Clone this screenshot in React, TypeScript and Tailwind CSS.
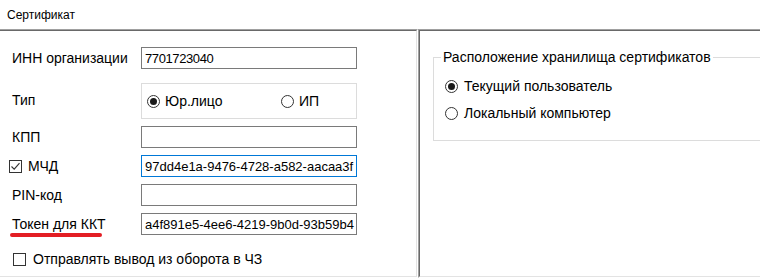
import React from "react";

const Radio = ({ checked }: { checked?: boolean }) => (
  <span className="w-[13px] h-[13px] rounded-full border border-[#333333] bg-white flex items-center justify-center shrink-0">
    {checked && <span className="w-[7px] h-[7px] rounded-full bg-[#1a1a1a]" />}
  </span>
);

const Checkbox = ({ checked }: { checked?: boolean }) => (
  <span className="w-[13px] h-[13px] border border-[#333333] bg-white flex items-center justify-center shrink-0">
    {checked && (
      <svg width="11" height="11" viewBox="0 0 11 11">
        <path d="M1.5 5.5 L4.2 8.2 L9.5 2.2" fill="none" stroke="#333333" strokeWidth="1.1" />
      </svg>
    )}
  </span>
);

const Field = ({
  value,
  focused,
  tight,
}: {
  value?: string;
  focused?: boolean;
  tight?: boolean;
}) => (
  <div
    className={`w-[216px] h-[22px] shrink-0 border bg-white pl-[3px] flex items-center overflow-hidden whitespace-nowrap text-[13px] ${
      focused ? "border-[#0078d7]" : "border-[#7a7a7a]"
    } ${tight ? "tracking-[-0.4px]" : ""}`}
  >
    {value}
  </div>
);

export default function App() {
  return (
    <div
      className="w-[760px] h-[280px] bg-white overflow-hidden text-[14px] text-black leading-none"
      style={{ fontFamily: '"Liberation Sans", Arial, sans-serif' }}
    >
      <div className="h-[29px] pl-[7px] flex items-center text-[12px]">Сертификат</div>
      <div className="flex h-[249px]">
        {/* left panel */}
        <div className="w-[418px] shrink-0 border-t border-r border-b border-t-[#a0a0a0] border-r-white border-b-white">
          <div className="h-full border-t border-r border-b border-t-[#696969] border-r-[#e3e3e3] border-b-[#e3e3e3] pt-[16px]">
            <div className="flex items-center h-[22px]">
              <div className="w-[141px] pl-[12px]">ИНН организации</div>
              <Field value="7701723040" tight />
            </div>
            <div className="flex items-center h-[36px] mt-[14px]">
              <div className="w-[141px] pl-[12px] -mt-[3px]">Тип</div>
              <div className="w-[216px] h-[36px] border border-[#dcdcdc] flex items-center pl-[5px]">
                <div className="flex items-center gap-[5px] w-[134px]">
                  <Radio checked />
                  <span>Юр.лицо</span>
                </div>
                <div className="flex items-center gap-[5px]">
                  <Radio />
                  <span>ИП</span>
                </div>
              </div>
            </div>
            <div className="flex items-center h-[22px] mt-[7px]">
              <div className="w-[141px] pl-[12px]">КПП</div>
              <Field />
            </div>
            <div className="flex items-center h-[22px] mt-[7px]">
              <div className="w-[141px] pl-[9px] flex items-center gap-[6px]">
                <Checkbox checked />
                <span>МЧД</span>
              </div>
              <Field value="97dd4e1a-9476-4728-a582-aacaa3f" focused />
            </div>
            <div className="flex items-center h-[22px] mt-[7px]">
              <div className="w-[141px] pl-[12px]">PIN-код</div>
              <Field />
            </div>
            <div className="flex items-center h-[22px] mt-[7px]">
              <div className="w-[141px] pl-[12px] relative">
                Токен для ККТ
                <span className="absolute left-[10px] top-[16px] w-[92px] h-[4px] rounded-full bg-[#e31e24]" />
              </div>
              <Field value="a4f891e5-4ee6-4219-9b0d-93b59b4" />
            </div>
            <div className="flex items-center gap-[7px] pl-[13px] mt-[17px]">
              <Checkbox />
              <span>Отправлять вывод из оборота в ЧЗ</span>
            </div>
          </div>
        </div>
        {/* right panel */}
        <div className="flex-1 border-t border-l border-b border-t-[#a0a0a0] border-l-[#a0a0a0] border-b-white">
          <div className="h-full border-t border-l border-b border-t-[#696969] border-l-[#696969] border-b-[#e3e3e3] pt-[26px] pl-[13px]">
            <div className="relative h-[84px] border border-r-0 border-[#dcdcdc]">
              <span className="absolute left-[7px] -top-[8px] bg-white px-[2px]">
                Расположение хранилища сертификатов
              </span>
              <div className="pt-[21px] pl-[11px] flex flex-col gap-[13px]">
                <div className="flex items-center gap-[6px]">
                  <Radio checked />
                  <span>Текущий пользователь</span>
                </div>
                <div className="flex items-center gap-[6px]">
                  <Radio />
                  <span>Локальный компьютер</span>
                </div>
              </div>
            </div>
          </div>
        </div>
      </div>
    </div>
  );
}
